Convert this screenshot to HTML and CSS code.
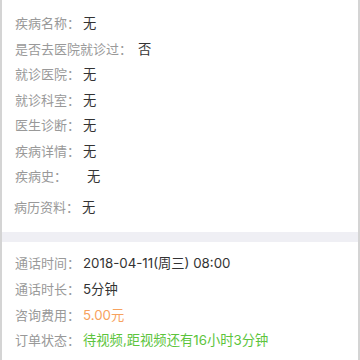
FILE: index.html
```html
<!DOCTYPE html>
<html lang="zh-CN">
<head>
  <meta charset="UTF-8">
  <meta name="viewport" content="width=device-width, initial-scale=1.0">
  <title>订单详情</title>
  <link rel="stylesheet" href="styles.css">
</head>
<body>
  <div class="page">
    <div class="section info">
      <div class="row"><span class="label">疾病名称：</span><span class="value">无</span></div>
      <div class="row"><span class="label">是否去医院就诊过：</span><span class="value wide">否</span></div>
      <div class="row"><span class="label">就诊医院：</span><span class="value">无</span></div>
      <div class="row"><span class="label">就诊科室：</span><span class="value">无</span></div>
      <div class="row"><span class="label">医生诊断：</span><span class="value">无</span></div>
      <div class="row"><span class="label">疾病详情：</span><span class="value">无</span></div>
      <div class="row"><span class="label fixed">疾病史：</span><span class="value">无</span></div>
      <div class="row records"><span class="label">病历资料：</span><span class="value">无</span></div>
    </div>

    <div class="divider"></div>

    <div class="section order">
      <div class="row"><span class="label">通话时间：</span><span class="value">2018-04-11(周三) 08:00</span></div>
      <div class="row"><span class="label">通话时长：</span><span class="value">5分钟</span></div>
      <div class="row"><span class="label">咨询费用：</span><span class="value price">5.00元</span></div>
      <div class="row"><span class="label">订单状态：</span><span class="value status">待视频,距视频还有16小时3分钟</span></div>
    </div>
  </div>
</body>
</html>
```

FILE: styles.css
```css
html, body {
  margin: 0;
  padding: 0;
  background-color: #ffffff;
}
body {
  font-family: Inter, "Noto Sans CJK SC", sans-serif;
  font-size: 13px;
  color: #333;
}
.page {
  width: 356px;
  min-height: 360px;
  border-left: 2px solid #d4d4d4;
  border-right: 2px solid #d4d4d4;
  background: #fff;
}
.section {
  padding-left: 13px;
}
.info {
  padding-top: 11px;
  padding-bottom: 12px;
}
.order {
  padding-top: 9px;
}
.row {
  line-height: 25.5px;
  white-space: nowrap;
}
.order .row {
  line-height: 25.8px;
}
.label {
  color: #999;
  display: inline-block;
}
.value {
  color: #333;
  font-size: 13.3px;
  margin-left: 3px;
}
.value.wide {
  margin-left: 6px;
}
.label.fixed {
  width: 69px;
}
.records {
  margin-top: 5px;
}
.records .label {
  margin-left: -1px;
}
.price {
  color: #f7a25e;
}
.status {
  color: #5cc43c;
}
.divider {
  height: 10px;
  background-color: #efeff4;
}
```
